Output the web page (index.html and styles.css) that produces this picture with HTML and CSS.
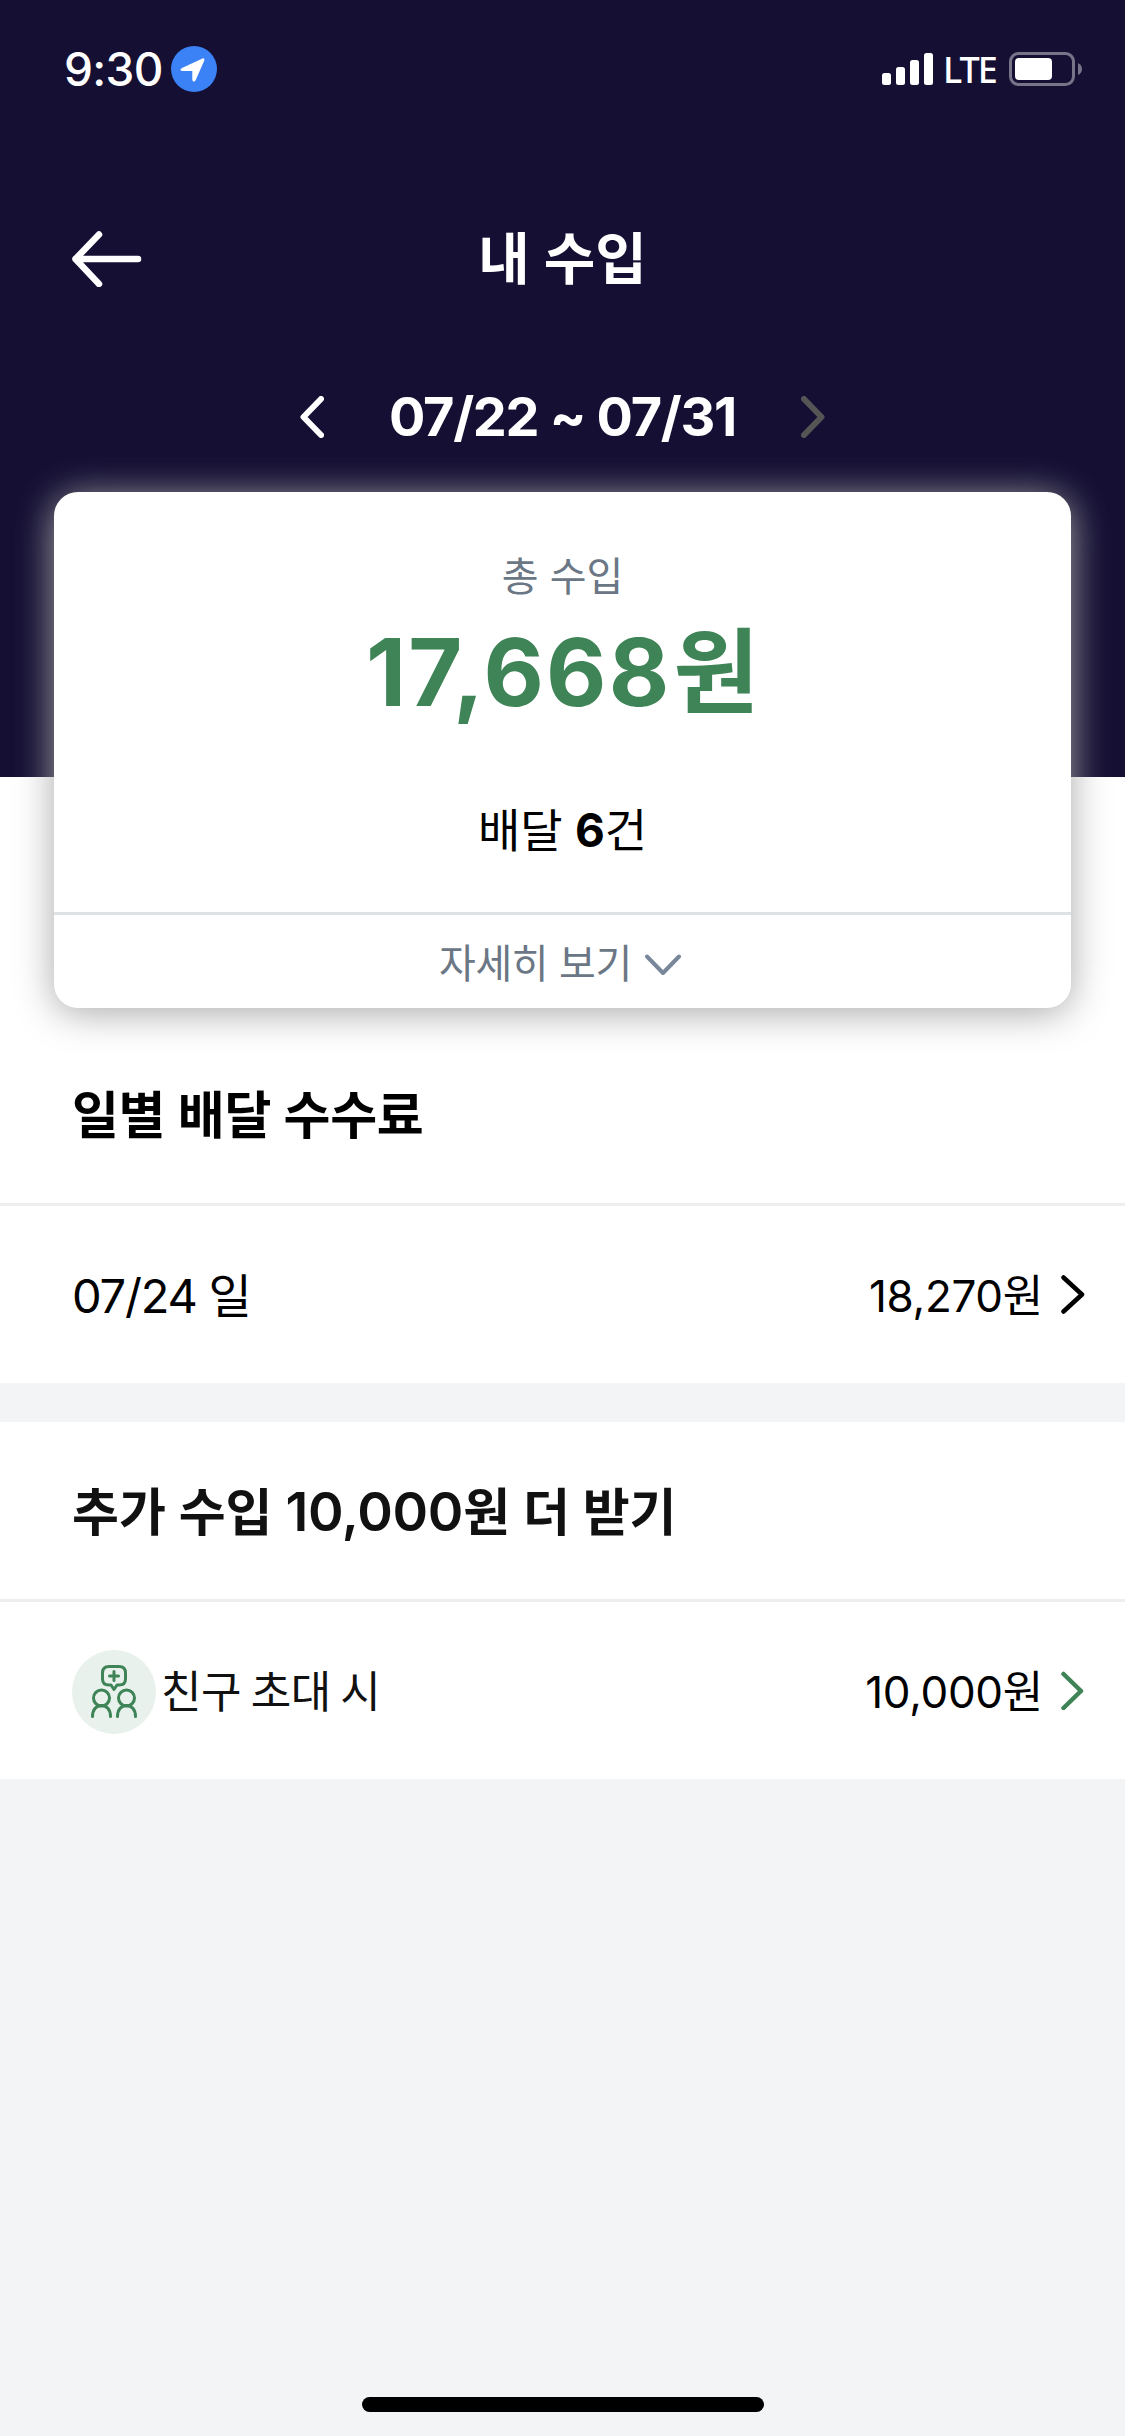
FILE: index.html
```html
<!DOCTYPE html>
<html lang="ko">
<head>
<meta charset="utf-8">
<title>내 수입</title>
<link rel="stylesheet" href="styles.css">
</head>
<body>
<div class="screen">
  <header class="hero">
    <div class="status">
      <div class="status-left">
        <span class="time">9:30</span>
        <svg class="location" viewBox="0 0 46 46"><circle cx="23" cy="23" r="23" fill="#3b82f6"/><path d="M11 22 31.500 12.500Q34 11.800 33.300 14.500L24.500 34.500Q22.500 37 21.300 34V25H11Q7.800 24.300 11 22Z" fill="#fff"/></svg>
      </div>
      <div class="status-right">
        <svg class="signal" viewBox="0 0 51 32" fill="#fff"><rect y="20" width="9" height="12" rx="2.500"/><rect x="14" y="14" width="9" height="18" rx="2.500"/><rect x="28" y="7" width="9" height="25" rx="2.500"/><rect x="42" width="9" height="32" rx="2.500"/></svg>
        <span class="network">LTE</span>
        <svg class="battery" viewBox="0 0 74 34"><rect x="1.500" y="1.500" width="63" height="31" rx="8" fill="none" stroke="#777388" stroke-width="3"/><rect x="6" y="6" width="37" height="22" rx="4" fill="#fff"/><path d="M69 11Q73 13 73 17T69 23Z" fill="#777388"/></svg>
      </div>
    </div>
    <nav class="nav">
      <svg class="back" viewBox="0 0 70 56" fill="none" stroke="#fff" stroke-width="6.500" stroke-linecap="round" stroke-linejoin="round"><path d="M66 28H3.500M27 3.500 3.500 28 27 53"/></svg>
      <h1 class="title">내 수입</h1>
    </nav>
    <div class="period">
      <svg class="step" viewBox="0 0 24 42" fill="none" stroke="#fff" stroke-width="6" stroke-linecap="round" stroke-linejoin="round"><path d="M21 3 3.500 21 21 39"/></svg>
      <span class="range">07/22 ~ 07/31</span>
      <svg class="step" viewBox="0 0 24 42" fill="none" stroke="#555" stroke-width="6" stroke-linecap="round" stroke-linejoin="round"><path d="M3 3 20.500 21 3 39"/></svg>
    </div>
  </header>

  <section class="card">
    <div class="summary">
      <span class="summary-label">총 수입</span>
      <strong class="amount">17,668<span class="won">원</span></strong>
      <span class="count">배달 <b>6</b>건</span>
    </div>
    <div class="more">
      <span class="more-label">자세히 보기</span>
      <svg class="more-icon" viewBox="0 0 36 22" fill="none" stroke="#788799" stroke-width="4" stroke-linecap="round" stroke-linejoin="round"><path d="M2 2.500 18 19 34 2.500"/></svg>
    </div>
  </section>

  <section class="block daily">
    <h2 class="heading daily-heading">일별 배달 수수료</h2>
    <div class="row">
      <span class="date">07/24 일</span>
      <span class="price">18,270원</span>
      <svg class="chevron" viewBox="0 0 24 39" fill="none" stroke="#000" stroke-width="4.500" stroke-linecap="round" stroke-linejoin="round"><path d="M2.500 2.500 21 19.500 2.500 36.500"/></svg>
    </div>
  </section>

  <section class="block bonus">
    <h2 class="heading bonus-heading"><span>추가 수입 <span class="bonus-number">10,000</span>원 더 받기</span></h2>
    <div class="row">
      <svg class="invite" viewBox="0 0 84 84"><circle cx="42" cy="42" r="42" fill="#e8f1ec"/><g fill="none" stroke="#3f8457" stroke-width="3" stroke-linecap="round" stroke-linejoin="round"><path d="M37 16.500H47Q53.500 16.500 53.500 23V29Q53.500 35 47 35H45L42 39.500 39 35H37Q30.500 35 30.500 29V23Q30.500 16.500 37 16.500ZM42 21.500V30.500M37.500 26H46.500"/><circle cx="29.500" cy="48" r="8"/><circle cx="54.500" cy="48" r="8"/><path d="M20.500 66.500C20.500 60 24 55.500 29.500 55.500S38.500 60 38.500 66.500M45.500 66.500C45.500 60 49 55.500 54.500 55.500S63.500 60 63.500 66.500"/></g></svg>
      <span class="friend">친구 초대 시</span>
      <span class="price">10,000원</span>
      <svg class="chevron" viewBox="0 0 24 39" fill="none" stroke="#3f8457" stroke-width="4.500" stroke-linecap="round" stroke-linejoin="round"><path d="M2.500 3 20 20 2.500 37"/></svg>
    </div>
  </section>

  <footer class="home"><div class="home-bar"></div></footer>
</div>
</body>
</html>
```
FILE: styles.css
```css
* { box-sizing: border-box; margin: 0; padding: 0; }

body {
  width: 1125px;
  background: #f3f4f6;
  color: #000;
  font-family: Inter, "Noto Sans CJK KR", sans-serif;
}

svg { display: block; flex: none; }
span, strong, h1, h2 { white-space: nowrap; }

.screen {
  display: flex;
  flex-direction: column;
  width: 1125px;
  height: 2436px;
  overflow: hidden;
}

.hero { height: 777px; background: #140f33; color: #fff; flex: none; }

.status {
  display: flex;
  justify-content: space-between;
  align-items: center;
  height: 138px;
  padding: 0 42px 0 64px;
}
.status-left, .status-right { display: flex; align-items: center; }
.time { width: 107px; font-size: 46px; font-weight: 500; line-height: 60px; letter-spacing: -0.7px; }
.location { width: 46px; height: 46px; }
.signal { width: 51px; height: 32px; }
.network { width: 76px; padding: 2px 0 0 10px; font: 500 36px/60px "Noto Sans", sans-serif; letter-spacing: -2px; }
.battery { width: 74px; height: 34px; }

.nav {
  display: grid;
  grid-template-columns: 70px 1fr 70px;
  align-items: center;
  height: 242px;
  padding: 0 72px;
}
.back { width: 70px; height: 56px; }
.title { font-size: 56px; font-weight: 600; line-height: 80px; text-align: center; }

.period {
  display: flex;
  justify-content: space-between;
  align-items: center;
  width: 525px;
  height: 74px;
  margin: 0 auto;
}
.step { width: 24px; height: 42px; }
.range { font-size: 54px; font-weight: 650; line-height: 74px; letter-spacing: -1.3px; }

.card {
  display: flex;
  flex-direction: column;
  flex: none;
  position: relative;
  width: 1017px;
  height: 516px;
  margin: -285px auto 0;
  border-radius: 24px;
  background: #fff;
  box-shadow: 0 5px 38px #a9a9a9;
}
.summary {
  display: flex;
  flex-direction: column;
  align-items: center;
  height: 423px;
  padding-top: 55px;
  border-bottom: 3px solid #dee2e6;
}
.summary-label { font-size: 40px; line-height: 60px; color: #6b7785; }
.amount { margin-top: 8px; font-size: 93px; font-weight: 700; line-height: 114px; letter-spacing: 2.2px; color: #3f8457; }
.won { margin-left: 2px; letter-spacing: 0; }
.count { margin-top: 69px; font-size: 46px; line-height: 64px; letter-spacing: -0.2px; }
.count b { font-weight: 700; }
.more {
  display: flex;
  justify-content: center;
  align-items: center;
  gap: 13px;
  height: 93px;
  padding: 4px 5px 0 0;
}
.more-label { padding-top: 1px; font-size: 40px; line-height: 60px; letter-spacing: -0.4px; color: #6b7785; }
.more-icon { width: 36px; height: 22px; margin-top: 3px; }

.block { flex: none; background: #fff; }
.daily { margin-top: -231px; padding-top: 231px; }
.heading {
  display: flex;
  align-items: center;
  height: 180px;
  padding: 3px 72px 0;
  border-bottom: 3px solid #eee;
  font-size: 51px;
  font-weight: 600;
  line-height: 74px;
}
.daily-heading { height: 198px; padding: 21px 72px 0; letter-spacing: -0.3px; }
.bonus-heading { color: #111; }
.bonus-number { font-size: 54px; letter-spacing: -0.3px; }
.row {
  display: flex;
  align-items: center;
  height: 177px;
  padding: 0 40px 0 72px;
}
.date { padding-top: 2px; font-size: 47px; line-height: 64px; letter-spacing: -1.2px; }
.price { margin-left: auto; padding-top: 2px; font-size: 44px; line-height: 64px; letter-spacing: -0.3px; }
.chevron { width: 24px; height: 39px; margin-left: 18px; }
.bonus { margin-top: 39px; }
.invite { width: 84px; height: 84px; margin-top: 2px; }
.friend { padding: 3px 0 0 5px; font-size: 44px; line-height: 64px; letter-spacing: -0.4px; word-spacing: -2.5px; color: #111; }

.home {
  display: flex;
  justify-content: center;
  align-items: flex-end;
  flex: 1;
  padding-bottom: 24px;
}
.home-bar { width: 402px; height: 15px; border-radius: 8px; background: #000; }
```
